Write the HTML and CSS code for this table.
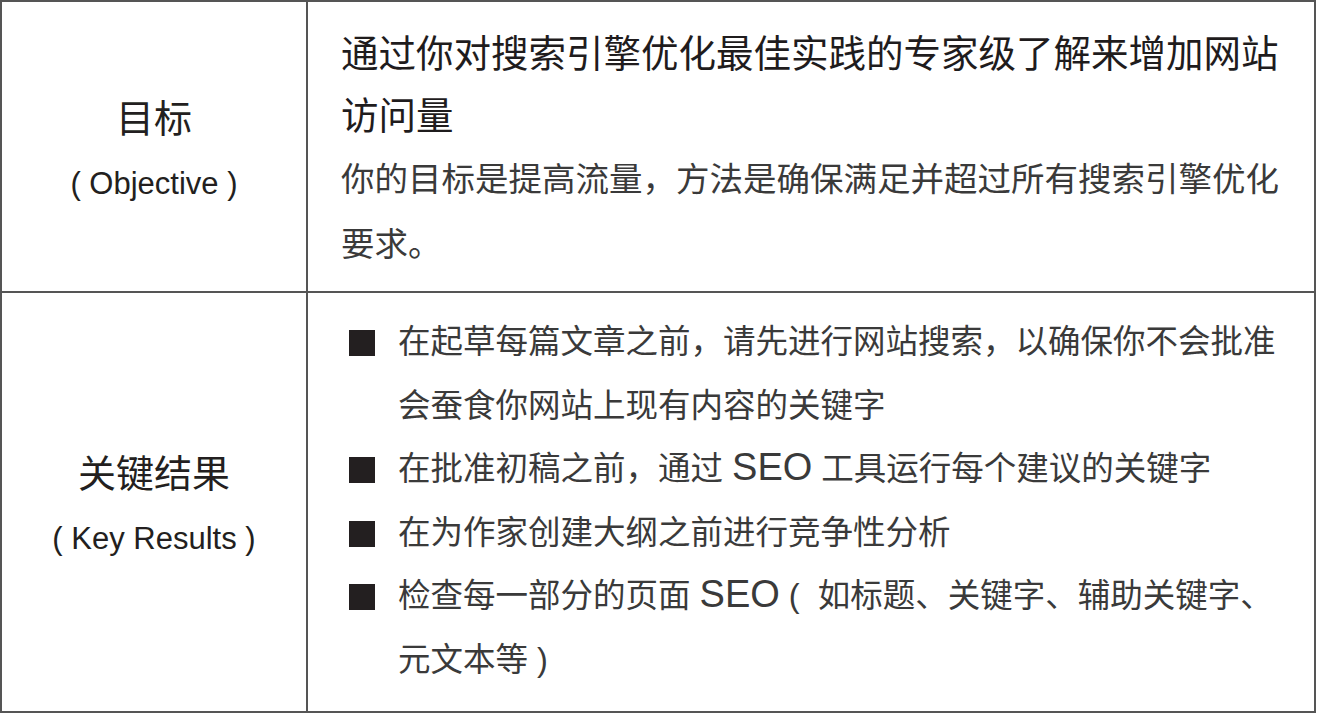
FILE: index.html
```html
<!DOCTYPE html>
<html lang="zh-CN">
<head>
    <meta charset="UTF-8">
    <meta name="viewport" content="width=device-width, initial-scale=1.0">
    <title>OKR - 搜索引擎优化</title>
    <link rel="stylesheet" href="styles.css">
</head>
<body>
    <table class="okr">
        <!-- Objective -->
        <tr class="row-objective">
            <th class="label">
                <div class="label-cn">目标</div>
                <div class="label-en">( Objective )</div>
            </th>
            <td class="content">
                <h2 class="goal-title">通过你对搜索引擎优化最佳实践的专家级了解来增加网站访问量</h2>
                <p class="goal-desc">你的目标是提高流量，方法是确保满足并超过所有搜索引擎优化要求。</p>
            </td>
        </tr>

        <!-- Key Results -->
        <tr class="row-results">
            <th class="label">
                <div class="label-cn">关键结果</div>
                <div class="label-en">( Key Results )</div>
            </th>
            <td class="content">
                <ul class="results">
                    <li><span class="result-text">在起草每篇文章之前，请先进行网站搜索，以确保你不会批准会蚕食你网站上现有内容的关键字</span></li>
                    <li><span class="result-text">在批准初稿之前，通过 <span class="en">SEO</span> 工具运行每个建议的关键字</span></li>
                    <li><span class="result-text">在为作家创建大纲之前进行竞争性分析</span></li>
                    <li><span class="result-text">检查每一部分的页面 <span class="en">SEO</span> (&nbsp; 如标题、关键字、辅助关键字、元文本等 )</span></li>
                </ul>
            </td>
        </tr>
    </table>
</body>
</html>
```

FILE: styles.css
```css
body {
    margin: 0;
    background: #ffffff;
    color: #231f20;
    font-family: "Liberation Sans", "Noto Sans CJK SC", sans-serif;
}
.okr {
    border-collapse: separate;
    border-spacing: 0;
    border: 2px solid #555555;
    width: 1316px;
}
.label {
    width: 304px;
    padding: 10px 0 0;
    border-right: 2px solid #555555;
    vertical-align: middle;
    text-align: center;
    font-weight: normal;
}
.label-cn {
    font-size: 38px;
    line-height: 64px;
    color: #231f20;
}
.label-en {
    font-size: 31px;
    line-height: 66px;
    color: #231f20;
}
.content {
    padding: 21px 24px 14px 33px;
    vertical-align: top;
}
.row-objective > th,
.row-objective > td {
    border-bottom: 2px solid #555555;
}
.goal-title {
    margin: 0;
    font-size: 37.5px;
    line-height: 62px;
    font-weight: normal;
    color: #1f1c1d;
}
.goal-desc {
    margin: 0;
    font-size: 33.5px;
    line-height: 65px;
    color: #3a3a3a;
}
.row-results .content {
    padding-top: 18px;
    padding-bottom: 19px;
}
.results {
    list-style: none;
    margin: 0;
    padding: 0 0 0 8px;
}
.results li {
    display: flex;
    font-size: 32.5px;
    line-height: 63.5px;
    color: #3a3a3a;
}
.results li::before {
    content: "";
    flex: 0 0 26px;
    height: 26px;
    margin: 19px 23px 0 0;
    background: #231f20;
}
.result-text {
    flex: 1;
}
.results .en {
    font-size: 38px;
    line-height: 1;
}
```
